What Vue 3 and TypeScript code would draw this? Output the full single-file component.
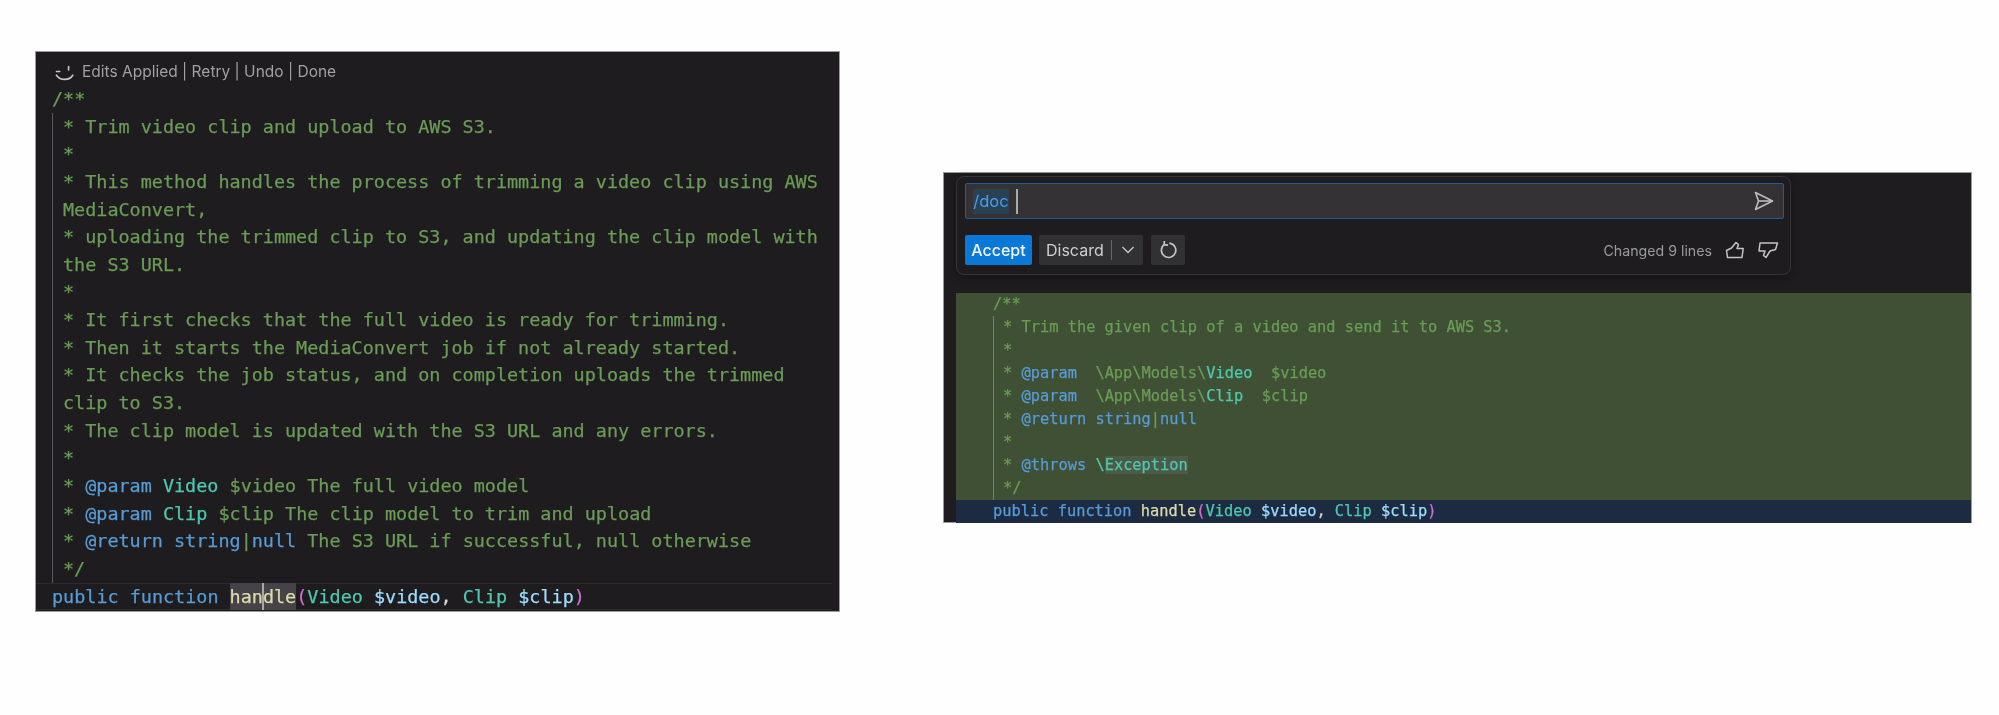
<script setup lang="ts">
type Tok = [string, string?]
const leftBody: Tok[][] = [
  [['* Trim video clip and upload to AWS S3.']],
  [['*']],
  [['* This method handles the process of trimming a video clip using AWS']],
  [['MediaConvert,']],
  [['* uploading the trimmed clip to S3, and updating the clip model with']],
  [['the S3 URL.']],
  [['*']],
  [['* It first checks that the full video is ready for trimming.']],
  [['* Then it starts the MediaConvert job if not already started.']],
  [['* It checks the job status, and on completion uploads the trimmed']],
  [['clip to S3.']],
  [['* The clip model is updated with the S3 URL and any errors.']],
  [['*']],
  [['* '], ['@param', 'kw'], [' '], ['Video', 'ty'], [' $video The full video model']],
  [['* '], ['@param', 'kw'], [' '], ['Clip', 'ty'], [' $clip The clip model to trim and upload']],
  [['* '], ['@return', 'kw'], [' '], ['string', 'kw'], ['|'], ['null', 'kw'], [' The S3 URL if successful, null otherwise']],
  [['*/']],
]
const rightBody: Tok[][] = [
  [['* Trim the given clip of a video and send it to AWS S3.']],
  [['*']],
  [['* '], ['@param', 'kw'], ['  \\App\\Models\\'], ['Video', 'ty'], ['  $video']],
  [['* '], ['@param', 'kw'], ['  \\App\\Models\\'], ['Clip', 'ty'], ['  $clip']],
  [['* '], ['@return', 'kw'], [' '], ['string', 'kw'], ['|'], ['null', 'kw']],
  [['*']],
  [['* '], ['@throws', 'kw'], [' '], ['\\', 'ty'], ['Exception', 'ty exc']],
  [['*/']],
]
</script>

<template>
  <div class="stage">
    <section class="panel left">
      <div class="edits">
        <svg class="smile" width="20" height="18" viewBox="0 0 20 18" fill="none" stroke="#c9c9c9" stroke-width="1.6" stroke-linecap="round">
          <path d="M1.5 8.5h3.2" />
          <path d="M13.6 3.5v3.4" />
          <path d="M1.4 12.2c2.2 3 4.9 4.2 8.4 4.2 3.4 0 6.2-1.4 8-4.2" />
        </svg>
        <span>Edits Applied | Retry | Undo | Done</span>
      </div>
      <div class="code big">
        <div class="line cm">/**</div>
        <div class="guide">
          <div v-for="(ln, i) in leftBody" :key="i" class="line cm">
            <span v-for="(t, j) in ln" :key="j" :class="t[1]">{{ t[0] }}</span>
          </div>
        </div>
        <div class="line sig cur">
          <span class="kw">public function </span><span class="hl fn">han<i class="caret"></i>dle</span><span class="br">(</span><span class="ty">Video</span><span class="var"> $video</span><span class="pn">, </span><span class="ty">Clip</span><span class="var"> $clip</span><span class="br">)</span>
        </div>
      </div>
    </section>

    <section class="panel right">
      <div class="widget">
        <div class="input">
          <span class="slash">/doc</span>
          <i class="icaret"></i>
          <svg class="send" width="20" height="20" viewBox="0 0 20 20" fill="none" stroke="#bdbdbd" stroke-width="1.6" stroke-linejoin="round">
            <path d="M1.5 1.5 18.5 10 1.5 18.5 4.5 10Z" />
            <path d="M4.5 10h14" />
          </svg>
        </div>
        <div class="actions">
          <button class="btn accept">Accept</button>
          <div class="btn discard">
            <span class="dlabel">Discard</span>
            <i class="sep"></i>
            <svg width="14" height="10" viewBox="0 0 14 10" fill="none" stroke="#c4c4c4" stroke-width="1.4"><path d="M1.5 2 7 7.5 12.5 2" /></svg>
          </div>
          <div class="btn rerun">
            <svg width="20" height="20" viewBox="0 0 20 20" fill="none" stroke="#c4c4c4" stroke-width="1.7">
              <path d="M6.4 4.4A7.2 7.2 0 1 0 11.4 3.1" />
              <path d="M6.3 1 6.2 4.7 10 5.2" />
            </svg>
          </div>
          <span class="changed">Changed 9 lines</span>
          <svg class="thumb" width="20" height="18" viewBox="0 0 20 18" fill="none" stroke="#c4c4c4" stroke-width="1.5" stroke-linejoin="round">
            <path d="M1.5 9.5 6.5 7 11 1.5l2.5 2L12 7.5h6.2L17 16.5H2.5Z" />
          </svg>
          <svg class="thumb down" width="22" height="18" viewBox="0 0 22 18" fill="none" stroke="#c4c4c4" stroke-width="1.5" stroke-linejoin="round">
            <path d="M3 2h17.5l-2 6.5-5.5 1.5-4 6.5L6.5 14.5 8 10H2Z" />
          </svg>
        </div>
      </div>
      <div class="diff code small">
        <div class="line cm">/**</div>
        <div class="guide">
          <div v-for="(ln, i) in rightBody" :key="i" class="line cm">
            <span v-for="(t, j) in ln" :key="j" :class="t[1]">{{ t[0] }}</span>
          </div>
        </div>
      </div>
      <div class="code small sigrow">
        <div class="line">
          <span class="kw">public function </span><span class="fn">handle</span><span class="br">(</span><span class="ty">Video</span><span class="var"> $video</span><span class="pn">, </span><span class="ty">Clip</span><span class="var"> $clip</span><span class="br">)</span>
        </div>
      </div>
    </section>
  </div>
</template>

<style>
html, body { margin: 0; background: #fefefe; }
</style>

<style scoped>
.stage {
  display: flex;
  align-items: flex-start;
  gap: 103px;
  padding: 51px 0 0 35px;
  width: 1999px;
  height: 715px;
  box-sizing: border-box;
  overflow: hidden;
}
.panel {
  background: #1e1c1f;
  box-sizing: border-box;
  border: 1px solid #9a9a9a;
  filter: blur(0.55px);
}
.left { flex: none; width: 805px; height: 561px; }
.right {
  flex: none;
  width: 1029px;
  height: 351px;
  margin-top: 121px;
  padding: 3px 0 0 12px;
}
.edits {
  display: flex;
  align-items: center;
  gap: 7px;
  height: 33px;
  padding: 6px 0 0 19px;
  box-sizing: border-box;
  font: 15.5px Inter, "Liberation Sans", sans-serif;
  color: #a0a0a0;
}
.smile { flex: none; }
.code {
  font-family: "DejaVu Sans Mono", monospace;
  white-space: pre;
  -webkit-text-stroke: 0.25px currentColor;
}
.big { font-size: 18.44px; padding-left: 16px; }
.big .line { height: 27.65px; line-height: 27.65px; }
.big .guide { border-left: 1.5px solid #57565a; padding-left: 10px; }
.small { font-size: 15.35px; }
.small .line { height: 23px; line-height: 23px; }
.small .guide { border-left: 1px solid #6c8a5c; padding-left: 9px; }
.cm { color: #6a9c56; }
.kw { color: #569cd6; }
.ty { color: #4ec9b0; }
.fn { color: #dcdcaa; }
.var { color: #9cdcfe; }
.pn { color: #d4d4d4; }
.br { color: #d16ed1; }
.big .sig {
  position: relative;
  margin: 0 7px 0 -16px;
  padding-left: 16px;
  box-shadow: inset 0 1px 0 #2c2b2e, inset 0 -1px 0 #2c2b2e;
}
.hl {
  position: relative;
  display: inline-block;
  height: 27px;
  vertical-align: top;
  background: #454347;
}
.caret {
  display: inline-block;
  width: 1.5px;
  height: 27px;
  margin: 0 -0.75px;
  vertical-align: top;
  background: #a8a8a8;
}
.widget {
  width: 835px;
  height: 99px;
  box-sizing: border-box;
  border: 1px solid #353437;
  border-radius: 8px;
  padding: 6px 6px 0 8px;
  box-shadow: 0 2px 10px #0006;
  font-family: Inter, "Liberation Sans", sans-serif;
}
.input {
  display: flex;
  align-items: center;
  height: 36px;
  box-sizing: border-box;
  background: #343235;
  border: 1.5px solid #1f5c9e;
  border-radius: 2px;
  padding: 0 9px 0 7px;
}
.slash {
  display: block;
  width: 36px;
  height: 25px;
  line-height: 25px;
  text-align: center;
  font-size: 16.5px;
  color: #45a0ee;
  background: #2a4155;
}
.icaret { width: 2px; height: 25px; margin-left: 7px; background: #aaa; }
.send { margin-left: auto; }
.actions { display: flex; align-items: center; margin-top: 16px; }
.btn {
  height: 30px;
  box-sizing: border-box;
  border: none;
  border-radius: 2px;
  display: flex;
  align-items: center;
  font: 16px Inter, "Liberation Sans", sans-serif;
}
.accept {
  width: 67px;
  justify-content: center;
  padding: 0;
  background: #0a78d6;
  color: #f2f6fa;
  font-weight: 500;
}
.discard {
  width: 104px;
  margin-left: 7px;
  padding-left: 7px;
  background: #313033;
  color: #cfcfcf;
}
.dlabel { width: 65px; }
.sep { width: 1px; height: 20px; background: #69686b; margin-right: 9px; }
.rerun {
  width: 34px;
  margin-left: 8px;
  justify-content: center;
  background: #313033;
}
.changed {
  margin-left: auto;
  font-size: 14.2px;
  color: #9a9a9a;
}
.thumb { margin-left: 13px; }
.down { margin-left: 12px; margin-right: 5px; }
.diff {
  margin-top: 18px;
  background: #3f5035;
  padding-left: 37px;
}
.sigrow {
  height: 23px;
  padding-left: 37px;
  background: #1c2b42;
}
.exc { background: #4c5a48; }
</style>
